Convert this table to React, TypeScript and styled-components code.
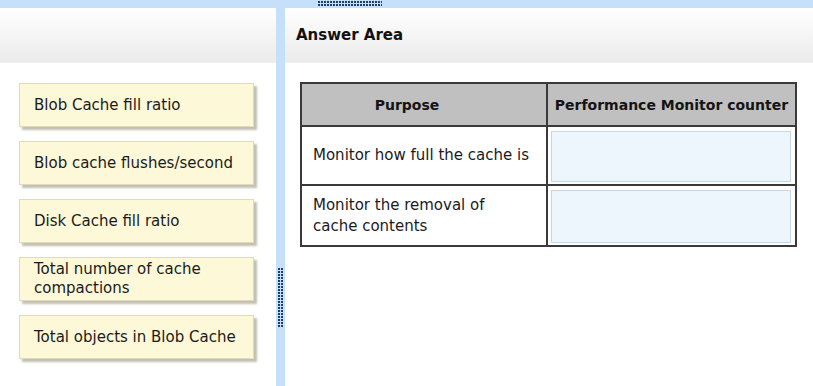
import styled, { createGlobalStyle } from "styled-components"

const GlobalStyle = createGlobalStyle`
	html, body {
		margin: 0;
		padding: 0;
		background: #ffffff;
		font-family: "DejaVu Sans", Verdana, sans-serif;
		color: #1b1b1b;
	}
`

const CHOICES = [
	"Blob Cache fill ratio",
	"Blob cache flushes/second",
	"Disk Cache fill ratio",
	"Total number of cache compactions",
	"Total objects in Blob Cache",
]

const ROWS = [
	{ id: "full", lines: ["Monitor how full the cache is"] },
	{ id: "removal", lines: ["Monitor the removal of", "cache contents"] },
]

// 2x2 dark dots on a 3px grid, like the splitter grips
const dotPattern = `
	background-color: #1f3f6b;
	background-image:
		linear-gradient(90deg, transparent 2px, #c6e0fa 2px),
		linear-gradient(180deg, transparent 2px, #c6e0fa 2px);
	background-size: 3px 3px;
`

const Page = styled.div`
	width: 813px;
	height: 386px;
	display: flex;
	flex-direction: column;
	overflow: hidden;
`

const TopBar = styled.div`
	height: 8px;
	flex-shrink: 0;
	background: #c6e0fa;
	display: flex;
	align-items: center;
	padding-left: 318px;
`

const TopGrip = styled.div`
	width: 64px;
	height: 6px;
	${dotPattern}
`

const Main = styled.div`
	flex: 1;
	display: flex;
	min-height: 0;
`

const Pane = styled.div<{ $width?: number }>`
	display: flex;
	flex-direction: column;
	${(p) => (p.$width ? `width: ${p.$width}px; flex-shrink: 0;` : "flex: 1; min-width: 0;")}
`

const PaneHeader = styled.div`
	height: 54px;
	flex-shrink: 0;
	display: flex;
	align-items: center;
	padding-left: 11px;
	background: linear-gradient(180deg, #ffffff 0%, #f6f6f6 45%, #ebebeb 100%);
	border-bottom: 1px solid #f0f0f0;
	font-size: 15px;
	font-weight: bold;
	color: #111;
`

const Splitter = styled.div`
	width: 9px;
	flex-shrink: 0;
	background: #c6e0fa;
	display: flex;
	flex-direction: column;
	align-items: center;
	padding-top: 260px;
`

const SideGrip = styled.div`
	width: 6px;
	height: 60px;
	${dotPattern}
`

const ChoiceList = styled.div`
	display: flex;
	flex-direction: column;
	gap: 14px;
	padding: 20px 0 0 19px;
`

const Choice = styled.div`
	width: 235px;
	height: 44px;
	box-sizing: border-box;
	display: flex;
	align-items: center;
	padding: 0 14px;
	background: #fcf8d8;
	border: 1px solid #e0dbbd;
	box-shadow: 3px 3px 2px #c2c0b2;
	font-size: 15px;
	line-height: 19px;
	color: #1b1b1b;
`

const AnswerBody = styled.div`
	padding: 19px 0 0 15px;
`

const Table = styled.div`
	width: 497px;
	display: grid;
	grid-template-columns: 244px 1fr;
	border: 2px solid #3a3a3a;
	box-sizing: border-box;
`

const HeadCell = styled.div<{ $shift?: number }>`
	height: 43px;
	box-sizing: border-box;
	display: flex;
	align-items: center;
	justify-content: center;
	padding-right: ${(p) => p.$shift ?? 0}px;
	background: #c0c0c0;
	font-size: 14px;
	font-weight: bold;
	color: #141414;
	white-space: nowrap;
	border-bottom: 2px solid #3a3a3a;
	& + & {
		border-left: 2px solid #3a3a3a;
	}
`

const Cell = styled.div<{ $last?: boolean }>`
	height: 59px;
	box-sizing: border-box;
	display: flex;
	border-bottom: ${(p) => (p.$last ? "none" : "2px solid #3a3a3a")};
`

const PurposeCell = styled(Cell)`
	flex-direction: column;
	justify-content: center;
	padding: 0 11px;
	font-size: 15px;
	line-height: 21px;
	color: #1b1b1b;
`

const TargetCell = styled(Cell)`
	border-left: 2px solid #3a3a3a;
	padding: 4px 4px 2px 3px;
`

const DropBox = styled.div`
	flex: 1;
	background: #eef6fd;
	border: 1px solid #c8d6e3;
`

export default function App() {
	return (
		<Page>
			<GlobalStyle />
			<TopBar>
				<TopGrip />
			</TopBar>
			<Main>
				<Pane $width={276}>
					<PaneHeader />
					<ChoiceList>
						{CHOICES.map((label) => (
							<Choice key={label}>{label}</Choice>
						))}
					</ChoiceList>
				</Pane>
				<Splitter>
					<SideGrip />
				</Splitter>
				<Pane>
					<PaneHeader>Answer Area</PaneHeader>
					<AnswerBody>
						<Table>
							<HeadCell $shift={34}>Purpose</HeadCell>
							<HeadCell>Performance Monitor counter</HeadCell>
							{ROWS.map((row, i) => {
								const last = i === ROWS.length - 1
								return [
									<PurposeCell key={row.id + "-p"} $last={last}>
										{row.lines.map((line) => (
											<span key={line}>{line}</span>
										))}
									</PurposeCell>,
									<TargetCell key={row.id + "-t"} $last={last}>
										<DropBox />
									</TargetCell>,
								]
							})}
						</Table>
					</AnswerBody>
				</Pane>
			</Main>
		</Page>
	)
}
